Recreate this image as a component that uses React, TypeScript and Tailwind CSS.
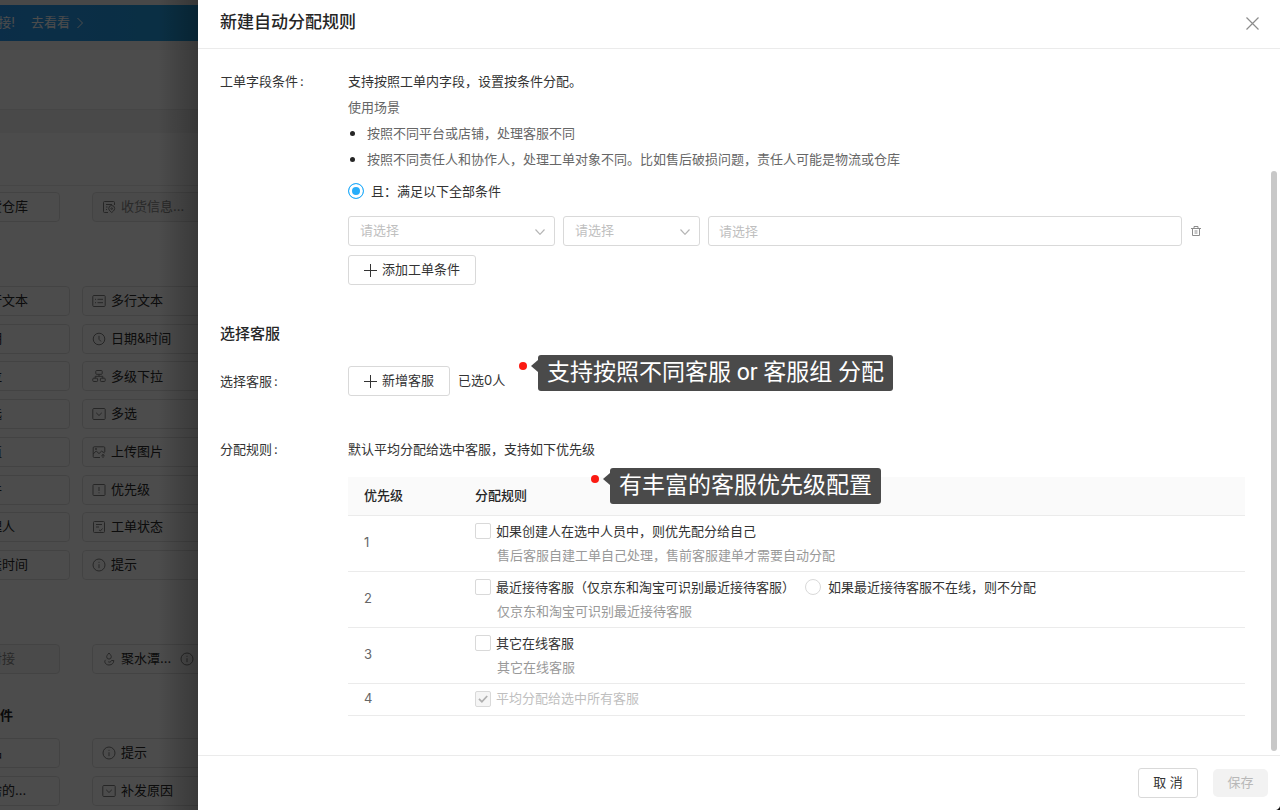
import React from 'react';

type IconName =
  | 'doc'
  | 'lines'
  | 'clock'
  | 'tree'
  | 'down'
  | 'image'
  | 'alert'
  | 'status'
  | 'info'
  | 'drop';

const iconShapes: Record<IconName, React.ReactNode> = {
  doc: (
    <>
      <path d="M6 12.5H2.5a1 1 0 0 1-1-1v-9a1 1 0 0 1 1-1h9a1 1 0 0 1 1 1V5" />
      <path d="M4 4.5h6M4 7h1.5M4 9.5h1" />
      <path d="M12.7 8.5c0 2-3 4-3 4s-3-2-3-4a3 3 0 0 1 6 0z" />
      <circle cx="9.7" cy="8.6" r="0.8" />
    </>
  ),
  lines: (
    <>
      <rect x="0.8" y="1.5" width="12.4" height="11" rx="1" />
      <path d="M3 5.3h1M5.5 5.3H11M3 8.7h1M5.500 8.7H11" />
    </>
  ),
  clock: (
    <>
      <circle cx="7" cy="7" r="5.8" />
      <path d="M7 3.8v3.5l2 2.2" />
    </>
  ),
  tree: (
    <>
      <rect x="3.8" y="1.5" width="6.4" height="3.8" rx="0.8" />
      <rect x="0.8" y="9.2" width="4.8" height="3.3" rx="0.8" />
      <rect x="8.4" y="9.2" width="4.8" height="3.3" rx="0.8" />
      <path d="M7 5.3v2M3.2 9.2V7.3h7.6v1.9" />
    </>
  ),
  down: (
    <>
      <rect x="0.8" y="1.5" width="12.4" height="11" rx="1" />
      <path d="M4.2 5.8L7 8.5l2.800-2.700" />
    </>
  ),
  image: (
    <>
      <path d="M8 12.5H2.2a1 1 0 0 1-1-1V2.8a1 1 0 0 1 1-1h9.6a1 1 0 0 1 1 1V7" />
      <path d="M1.2 9l3-3L7 8.6l2.5-2.4L12.8 8M11 13V9.5M9.3 11L11 9.400l1.700 1.600" />
      <circle cx="4" cy="4" r="0.6" />
    </>
  ),
  alert: (
    <>
      <rect x="1" y="1.5" width="12" height="11" rx="0.8" />
      <path d="M7 4v4M7 9.3v1" />
    </>
  ),
  status: (
    <>
      <rect x="1.5" y="1.5" width="11" height="11" rx="1" />
      <path d="M4 4.5h6M4 7h3M7 9.8L8.300 11l2.200-2.500" />
    </>
  ),
  info: (
    <>
      <circle cx="7" cy="7" r="6" />
      <path d="M7 6.2v4M7 3.800v1" />
    </>
  ),
  drop: (
    <>
      <path d="M7 1c1.800 2 2.300 3 2.300 3.800a2.300 2.300 0 0 1-4.600 0C4.700 4 5.200 3 7 1z" />
      <path d="M3.700 7.800c-2 1.500-.5 5.200 3.300 5.200 3 0 4.800-2 4.800-4.500H9.500C9 10 7.500 10.600 6.200 9.800" />
    </>
  ),
};

const FieldIcon = ({ name }: { name: IconName }) => (
  <svg viewBox="0 0 14 14" className="size-3.5 shrink-0" fill="none" stroke="#808080" strokeWidth="1">
    {iconShapes[name]}
  </svg>
);

type Field = { icon: IconName; label: string; disabled?: boolean; info?: boolean };

const basicFields: Field[] = [
  { icon: 'lines', label: '单行文本' },
  { icon: 'lines', label: '多行文本' },
  { icon: 'clock', label: '日期' },
  { icon: 'clock', label: '日期&时间' },
  { icon: 'down', label: '下拉' },
  { icon: 'tree', label: '多级下拉' },
  { icon: 'down', label: '单选' },
  { icon: 'down', label: '多选' },
  { icon: 'lines', label: '数值' },
  { icon: 'image', label: '上传图片' },
  { icon: 'doc', label: '附件' },
  { icon: 'alert', label: '优先级' },
  { icon: 'info', label: '处理人' },
  { icon: 'status', label: '工单状态' },
  { icon: 'clock', label: '推送时间' },
  { icon: 'info', label: '提示' },
];

const orderFields: Field[] = [
  { icon: 'doc', label: '发货仓库' },
  { icon: 'doc', label: '收货信息...', disabled: true },
];

const erpFields: Field[] = [
  { icon: 'drop', label: '未对接', disabled: true },
  { icon: 'drop', label: '聚水潭...', info: true },
];

const customFields: Field[] = [
  { icon: 'lines', label: '商品' },
  { icon: 'info', label: '提示' },
  { icon: 'down', label: '缺啥的...' },
  { icon: 'down', label: '补发原因' },
];

const FieldCard = ({ icon, label, disabled, info }: Field) => (
  <div
    className={`flex h-[30px] items-center gap-[5px] rounded border border-[#e2e2e2] px-[9px] text-[13px] whitespace-nowrap ${
      disabled ? 'bg-[#f7f7f7] text-[#8a8a8a]' : 'text-[#2b2b2b]'
    }`}
  >
    <FieldIcon name={icon} />
    {label}
    {info && (
      <span className="pl-1">
        <FieldIcon name="info" />
      </span>
    )}
  </div>
);

const PageBehind = () => (
  <aside className="relative w-[198px] shrink-0 overflow-hidden bg-white">
    <div className="h-[5px] bg-[#f0f0f0]" />
    <div className="flex h-9 items-center bg-gradient-to-r from-[#2798f0] to-[#229fe0] text-[13px] whitespace-nowrap text-white">
      <span className="w-[15px] overflow-hidden">
        <span className="float-right">链接!</span>
      </span>
      <a href="#" className="ml-4 flex items-center gap-1.5">
        去看看
        <svg viewBox="0 0 8 12" className="h-3 w-2" fill="none" stroke="currentColor">
          <path d="M1.5 1l5 5-5 5" />
        </svg>
      </a>
    </div>
    <div className="h-[9px] bg-[#f7f7f7]" />
    <div className="h-[59px]" />
    <div className="h-6 border-t border-[#ebebeb] bg-[#f5f5f5]" />
    <div className="h-[53px] border-b border-[#ebebeb]" />

    <div className="mt-1.5 -ml-[53px] grid grid-cols-[113px_113px] gap-x-8">
      {orderFields.map((field) => (
        <FieldCard key={field.label} {...field} />
      ))}
    </div>

    <div className="mt-16 -ml-[53px] grid h-[294px] grid-cols-[123px_123px] content-between gap-x-3">
      {basicFields.map((field) => (
        <FieldCard key={field.label} {...field} />
      ))}
    </div>

    <div className="mt-16 -ml-[53px] grid grid-cols-[113px_113px] gap-x-8">
      {erpFields.map((field) => (
        <FieldCard key={field.label} {...field} />
      ))}
    </div>

    <h3 className="mt-7 -ml-[13px] text-[13px] leading-[26px] font-bold text-[#222]">组件</h3>
    <div className="mt-2.5 -ml-[53px] grid grid-cols-[113px_113px] gap-x-8 gap-y-2">
      {customFields.map((field) => (
        <FieldCard key={field.label} {...field} />
      ))}
    </div>

    {/* mask */}
    <div className="absolute inset-0 bg-black/70" />
    <div className="absolute inset-y-0 right-0 w-10 bg-gradient-to-r from-transparent to-black/25" />
  </aside>
);

const Callout = ({ children, className }: { children: React.ReactNode; className: string }) => (
  <div className={`absolute z-10 flex items-start whitespace-nowrap ${className}`}>
    <span className="mt-[7px] size-2 rounded-full bg-[#fb1a12]" />
    <svg viewBox="0 0 7 12" className="mt-[5px] ml-1 h-3 w-[7px]" fill="#4a4a4a">
      <path d="M7 0v12L0 6z" />
    </svg>
    <span className="rounded-[3px] bg-[#4a4a4a] px-[9px] font-['Roboto','Noto_Sans_CJK_SC',sans-serif] text-[23px] leading-9 text-white">
      {children}
    </span>
  </div>
);

const PlusIcon = () => (
  <svg viewBox="0 0 13 13" className="size-[13px]" fill="none" stroke="currentColor">
    <path d="M6.5 0v13M0 6.5h13" />
  </svg>
);

const AddButton = ({ children }: { children: React.ReactNode }) => (
  <button
    type="button"
    className="flex h-[30px] items-center gap-[5px] rounded-[3px] border border-[#d9d9d9] bg-white px-[15px]"
  >
    <PlusIcon />
    {children}
  </button>
);

const PlainSelect = ({ label, className }: { label: string; className: string }) => (
  <div className={`relative ${className}`}>
    <select
      aria-label={label}
      className="h-[30px] w-full appearance-none rounded-[3px] border border-[#d9d9d9] bg-white px-[11px] text-[#bfbfbf] outline-none"
    >
      <option>请选择</option>
    </select>
    <svg
      viewBox="0 0 10 6"
      className="pointer-events-none absolute top-[13px] right-2.5 h-1.5 w-2.5"
      fill="none"
      stroke="#b5b5b5"
      strokeWidth="1.2"
    >
      <path d="M0.5 0.5L5 5.3l4.500-4.800" />
    </svg>
  </div>
);

const rules = [
  { title: '如果创建人在选中人员中，则优先配分给自己', desc: '售后客服自建工单自己处理，售前客服建单才需要自动分配' },
  {
    title: '最近接待客服（仅京东和淘宝可识别最近接待客服）',
    desc: '仅京东和淘宝可识别最近接待客服',
    extra: '如果最近接待客服不在线，则不分配',
  },
  { title: '其它在线客服', desc: '其它在线客服' },
];

const RuleTable = () => (
  <table className="w-full border-collapse text-left">
    <thead>
      <tr className="h-[38px] border-b border-[#ebebeb] bg-[#fafafa] text-[#262626]">
        <th className="w-[111px] pl-4 font-medium">优先级</th>
        <th className="pl-4 font-medium">分配规则</th>
      </tr>
    </thead>
    <tbody>
      {rules.map((rule, index) => (
        <tr key={rule.title} className="h-14 border-b border-[#ebebeb]">
          <td className="pl-4 text-[#666]">{index + 1}</td>
          <td className="pl-4 leading-6">
            <div className="flex items-center gap-2.5">
              <label className="flex items-center gap-[5px]">
                <input
                  type="checkbox"
                  className="size-4 shrink-0 appearance-none rounded-[2px] border border-[#d9d9d9] bg-white"
                />
                {rule.title}
              </label>
              {rule.extra && (
                <label className="flex items-center gap-[7px]">
                  <input type="radio" className="size-4 appearance-none rounded-full border border-[#d9d9d9] bg-white" />
                  {rule.extra}
                </label>
              )}
            </div>
            <p className="pl-[22px] text-[#999]">{rule.desc}</p>
          </td>
        </tr>
      ))}
      <tr className="h-8 border-b border-[#ebebeb]">
        <td className="pl-4 text-[#666]">4</td>
        <td className="pl-4">
          <label className="relative flex items-center gap-[5px] text-[#bfbfbf]">
            <input
              type="checkbox"
              defaultChecked
              disabled
              className="size-4 shrink-0 appearance-none rounded-[2px] border border-[#d9d9d9] bg-[#f5f5f5]"
            />
            <svg
              viewBox="0 0 16 16"
              className="absolute left-0 size-4"
              fill="none"
              stroke="#b0b0b0"
              strokeWidth="1.8"
            >
              <path d="M4 7.800l2.900 3L12.200 5" />
            </svg>
            平均分配给选中所有客服
          </label>
        </td>
      </tr>
    </tbody>
  </table>
);

type FormRowProps = { label: string; labelClassName?: string; children: React.ReactNode };

const FormRow = ({ label, labelClassName = 'leading-[26px]', children }: FormRowProps) => (
  <div className="flex">
    <div className={`w-32 shrink-0 ${labelClassName}`}>
      {label}
      <span className="ml-0.5">:</span>
    </div>
    <div className="relative min-w-0 flex-1">{children}</div>
  </div>
);

const App = () => {
  return (
    <div className="flex h-screen overflow-hidden bg-white font-['Inter','Noto_Sans_CJK_SC',sans-serif] text-[13px] text-[#333]">
      <PageBehind />

      <main className="relative flex min-w-0 flex-1 flex-col bg-white">
        <header className="flex h-[49px] shrink-0 items-center justify-between border-b border-[#ebebeb] pr-[21px] pb-0.5 pl-[22px]">
          <h1 className="text-[17px] font-medium text-[#262626]">新建自动分配规则</h1>
          <button type="button" aria-label="关闭">
            <svg viewBox="0 0 13 13" className="size-[13px]" fill="none" stroke="#8c8c8c" strokeWidth="1.2">
              <path d="M0.5 0.5l12 12M12.5 0.5l-12 12" />
            </svg>
          </button>
        </header>

        <div className="relative min-h-0 flex-1 overflow-hidden pt-[19px] pr-[35px] pl-[22px]">
          <FormRow label="工单字段条件">
            <div className="leading-[26px]">
              <p>支持按照工单内字段，设置按条件分配。</p>
              <div className="text-[#666]">
                <p>使用场景</p>
                <ul className="list-disc pl-[19px] marker:text-base marker:text-[#262626]">
                  <li>按照不同平台或店铺，处理客服不同</li>
                  <li>按照不同责任人和协作人，处理工单对象不同。比如售后破损问题，责任人可能是物流或仓库</li>
                </ul>
              </div>
              <label className="mt-1.5 flex items-center gap-[7px]">
                <input
                  type="radio"
                  defaultChecked
                  className="size-4 appearance-none rounded-full border border-[#27adfa] bg-[#27adfa] shadow-[inset_0_0_0_3px_white]"
                />
                且：满足以下全部条件
              </label>
            </div>
            <div className="mt-3 flex items-center gap-2 pr-[43px]">
              <PlainSelect label="字段" className="w-[207px]" />
              <PlainSelect label="条件" className="w-[137px]" />
              <input
                type="text"
                aria-label="条件值"
                placeholder="请选择"
                className="h-[30px] min-w-0 flex-1 rounded-[3px] border border-[#d9d9d9] px-2.5 outline-none placeholder:text-[#bfbfbf]"
              />
              <button type="button" aria-label="删除">
                <svg viewBox="0 0 12 12" className="size-3" fill="none" stroke="#8c8c8c">
                  <path d="M1 3.5h10M2.5 3.5v7h7v-7M4 3.3V1.5h4v1.800M4.500 6h3M4.500 8h3" />
                </svg>
              </button>
            </div>
            <div className="mt-[9px]">
              <AddButton>添加工单条件</AddButton>
            </div>
          </FormRow>

          <h2 className="mt-9 mb-[19px] text-[15px] leading-[26px] font-medium text-[#262626]">选择客服</h2>

          <FormRow label="选择客服" labelClassName="leading-[30px]">
            <div className="flex items-center gap-2">
              <AddButton>新增客服</AddButton>
              <span>已选0人</span>
            </div>
            <Callout className="-top-[11px] left-[171px]">支持按照不同客服 or 客服组 分配</Callout>
          </FormRow>

          <div className="mt-10">
            <FormRow label="分配规则">
              <p className="leading-[26px]">默认平均分配给选中客服，支持如下优先级</p>
              <div className="relative mt-[15px]">
                <RuleTable />
                <Callout className="-top-[9px] left-[243px]">有丰富的客服优先级配置</Callout>
              </div>
            </FormRow>
          </div>

          {/* scrollbar thumb */}
          <div className="absolute top-[122px] right-[3px] bottom-1 w-1.5 rounded-full bg-[#c8c8c8]" />
        </div>

        <footer className="flex h-[55px] shrink-0 items-center justify-end gap-[15px] border-t border-[#ebebeb] pr-3">
          <button type="button" className="h-[30px] w-[60px] rounded-[3px] border border-[#d9d9d9] bg-white">
            取 消
          </button>
          <button type="button" disabled className="h-7 w-[55px] rounded-[5px] bg-[#f2f2f2] text-[#b8b8b8]">
            保存
          </button>
        </footer>

        <svg viewBox="0 0 4 4" className="absolute right-0 bottom-0 size-1" fill="#111">
          <path d="M4 0v4H0C2 3.5 3.5 2 4 0z" />
        </svg>
      </main>
    </div>
  );
};

export default App;
